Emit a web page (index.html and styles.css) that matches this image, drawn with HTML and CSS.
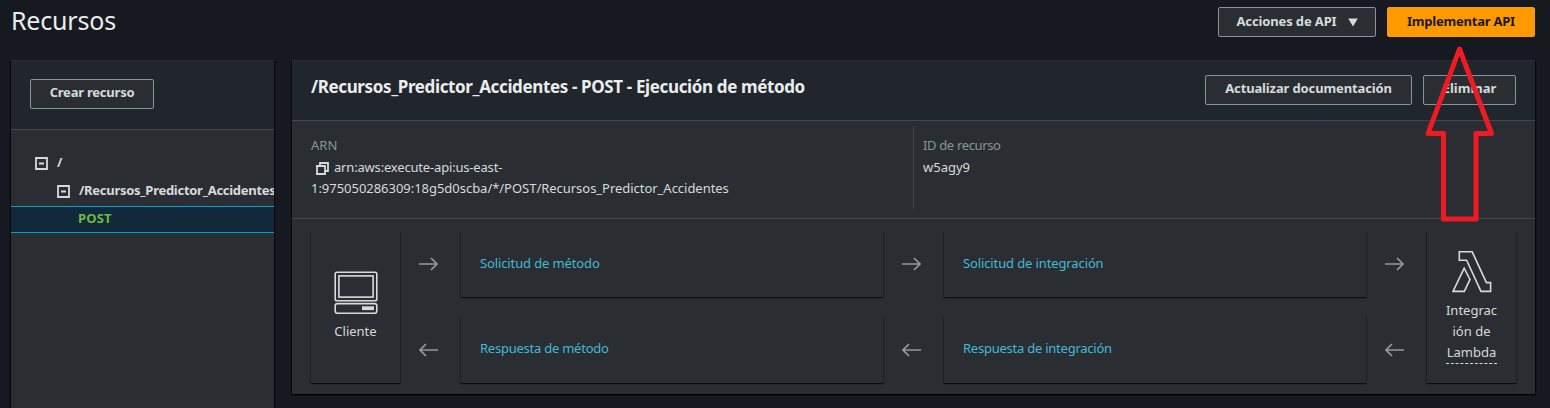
FILE: index.html
```html
<!DOCTYPE html>
<html lang="es">
<head>
<meta charset="utf-8">
<title>Recursos</title>
<link rel="stylesheet" href="styles.css">
</head>
<body>
<header class="topbar">
  <h1 class="title">Recursos</h1>
  <div class="actions">
    <button class="btn btn-api"><span class="t-api">Acciones de API</span><svg class="caret" width="10" height="9" viewBox="0 0 10 9"><path d="M.2 .5h9.6L5 8.5z" fill="#d5dbdb"/></svg></button>
    <button class="btn btn-primary"><span class="t-deploy">Implementar API</span></button>
  </div>
</header>
<main class="columns">
  <aside class="panel side">
    <div class="side-head"><button class="btn btn-create"><span class="t-create">Crear recurso</span></button></div>
    <div class="tree">
      <div class="node root"><svg class="toggle" width="13" height="13" viewBox="0 0 13 13"><path d="M1 1h11v11H1zM4 6.5h5" fill="none" stroke="#d5dbdb" stroke-width="1.8"/></svg><span>/</span></div>
      <div class="node child"><svg class="toggle" width="13" height="13" viewBox="0 0 13 13"><path d="M1 1h11v11H1zM4 6.5h5" fill="none" stroke="#d5dbdb" stroke-width="1.8"/></svg><span class="t-node">/Recursos_Predictor_Accidentes</span></div>
      <div class="node method"><span class="t-post">POST</span></div>
    </div>
  </aside>
  <section class="panel detail">
    <div class="detail-head">
      <h2 class="subtitle">/Recursos_Predictor_Accidentes - POST - Ejecución de método</h2>
      <div class="detail-actions">
        <button class="btn btn-doc"><span class="t-doc">Actualizar documentación</span></button>
        <button class="btn btn-del"><span class="t-del">Eliminar</span></button>
      </div>
    </div>
    <div class="info">
      <div class="field arn">
        <div class="label">ARN</div>
        <div class="value"><svg class="copy" width="13" height="13" viewBox="0 0 13 13"><path d="M1 4h8v8H1zM4 4V1h8v8H9" fill="none" stroke="#d5dbdb" stroke-width="1.8"/></svg><span class="t-arn1">arn:aws:execute-api:us-east-</span><br><span class="t-arn2">1:975050286309:18g5d0scba/*/POST/Recursos_Predictor_Accidentes</span></div>
      </div>
      <div class="field ident">
        <div class="label t-id">ID de recurso</div>
        <div class="value">w5agy9</div>
      </div>
    </div>
    <div class="flow">
      <div class="box end client">
        <svg width="44" height="44" viewBox="0 0 44 44" fill="none" stroke="#d5dbdb" stroke-width="1.6"><rect x="1.2" y="1.2" width="41.6" height="28.6" rx="1.8"/><rect x="4.9" y="4.9" width="34.2" height="21.2"/><rect x="1.2" y="32.6" width="41.6" height="9.6" rx="2.2"/><path d="M28 37.2H40" stroke-width="3.8"/></svg>
        <span class="t-client">Cliente</span>
      </div>
      <div class="arrow"><svg width="20" height="14" viewBox="0 0 20 14"><path d="M0 7h18M12 1l6 6-6 6"/></svg></div>
      <div class="box step"><a class="t-s1">Solicitud de método</a></div>
      <div class="arrow"><svg width="20" height="14" viewBox="0 0 20 14"><path d="M0 7h18M12 1l6 6-6 6"/></svg></div>
      <div class="box step"><a class="t-s2">Solicitud de integración</a></div>
      <div class="arrow"><svg width="20" height="14" viewBox="0 0 20 14"><path d="M0 7h18M12 1l6 6-6 6"/></svg></div>
      <div class="box end lambda">
        <svg width="42" height="44" viewBox="0 0 42 44" fill="none" stroke="#d5dbdb" stroke-width="1.6"><path d="M8.3 1.8H21.2L35.4 32.6h4.2v8.8H30L15.6 10.2H8.3zM13.2 18.2 2 41.4h11.3l5.7-12z"/></svg>
        <span class="lambda-text">Integrac<br>ión de<br>Lambda</span>
      </div>
      <div class="arrow back"><svg width="20" height="14" viewBox="0 0 20 14"><path d="M19 7H1M7 1L1 7l6 6"/></svg></div>
      <div class="box step"><a class="t-s3">Respuesta de método</a></div>
      <div class="arrow back"><svg width="20" height="14" viewBox="0 0 20 14"><path d="M19 7H1M7 1L1 7l6 6"/></svg></div>
      <div class="box step"><a class="t-s4">Respuesta de integración</a></div>
      <div class="arrow back"><svg width="20" height="14" viewBox="0 0 20 14"><path d="M19 7H1M7 1L1 7l6 6"/></svg></div>
    </div>
  </section>
</main>
<svg class="callout" width="72" height="178" viewBox="0 0 72 178"><path d="M35.5 5 67.5 89.5H52V175H19.5V89.5H4z" fill="none" stroke="#ed1c24" stroke-width="5" stroke-linejoin="round"/></svg>
</body>
</html>
```
FILE: styles.css
```css
* { box-sizing: border-box; }
body {
  margin: 0; height: 408px; overflow: hidden; position: relative;
  background: #16191f; color: #d5dbdb;
  font: 13px/21px "Noto Sans", "Open Sans", sans-serif;
}
span, a, h1, h2 { white-space: nowrap; }
svg { flex: none; display: block; }
.topbar { height: 60px; padding: 7px 15px 0 11px; display: flex; justify-content: space-between; }
.title { margin: -3px 0 0; font-size: 25px; line-height: 32px; font-weight: 400; color: #eaeded; letter-spacing: -.2px; }
.actions, .detail-actions { display: flex; gap: 11px; }
.btn {
  height: 30px; padding: 0 0 2px; border: 1px solid #879596; border-radius: 2px;
  background: #2a2e33; color: #d5dbdb; font: 700 13px/20px "Noto Sans", sans-serif;
  display: flex; align-items: center; justify-content: center;
}
.btn-api { width: 158px; gap: 11px; }
.caret { margin-top: 3px; }
.btn-primary { width: 148px; background: #ff9900; border-color: #ff9900; color: #16191f; }
.btn-create, .btn-doc, .btn-del { padding-bottom: 4px; }
.btn-create { width: 124px; }
.btn-doc { width: 207px; }
.btn-del { width: 93px; }
.t-api { letter-spacing: -.13px; }
.t-deploy, .t-create { letter-spacing: -.22px; }
.t-doc { letter-spacing: -.13px; }
.columns { display: flex; gap: 18px; padding-left: 11px; align-items: flex-start; }
.panel { background: #2a2e33; border-top: 1px solid #2a2e33; box-shadow: 0 1px 1px #000a, 1px 1px 1px #0008, -1px 1px 1px #0008; }
.side { width: 263px; height: 360px; overflow: hidden; }
.side-head { height: 69px; padding: 18px 19px; background: #21252c; border-bottom: 1px solid #414750; }
.tree { padding-top: 19px; font-weight: 700; }
.node { display: flex; align-items: center; gap: 9px; height: 28px; }
.node > span { margin-top: -1px; }
.root { padding-left: 24px; }
.child { padding-left: 46px; height: 29px; padding-bottom: 1px; }
.t-node { letter-spacing: -.28px; }
.method { height: 27px; padding: 0 0 1px 67px; background: #12293b; border: solid #00a1c9; border-width: 1px 0; color: #6fb83f; letter-spacing: .2px; }
.detail { width: 1243px; height: 334px; }
.detail-head { height: 60px; padding: 14px 19px 0; display: flex; justify-content: space-between; background: #21252c; border-bottom: 1px solid #414750; }
.subtitle { margin: 1px 0 0; font-size: 17px; line-height: 22px; color: #eaeded; letter-spacing: -.37px; }
.info { height: 98px; padding: 5px 19px 9px; display: grid; grid-template-columns: 602px 1fr; border-bottom: 1px solid #414750; }
.field { padding-top: 9px; }
.ident { padding-left: 9px; border-left: 1px solid #414750; }
.label { color: #879596; margin-bottom: 1px; }
.t-id { letter-spacing: -.35px; }
.t-arn1 { letter-spacing: -.18px; }
.t-arn2 { letter-spacing: -.03px; }
.copy { display: inline-block; margin: 0 5px 0 5px; vertical-align: -3px; }
.flow { display: grid; grid-template: 66px 67px / 89px 61px 422px 61px 422px 61px 89px; row-gap: 19px; padding: 12px 19px 0; }
.box { clip-path: inset(0 -3px -3px); box-shadow: 0 1px 1px #0007, 1px 1px 1px #0003, -1px 1px 1px #0003; display: flex; }
.end { grid-row: 1 / 3; flex-direction: column; align-items: center; }
.client { grid-column: 1; padding-top: 40px; gap: 6px; }
.lambda { grid-column: 7; padding-top: 19px; gap: 6px; text-align: center; }
.lambda-text { border-bottom: 1px dashed #d5dbdb; }
.step { align-items: center; padding: 0 19px 2px; color: #44b9d6; }
.t-s1, .t-s2 { letter-spacing: -.12px; }
.t-s3, .t-s4 { letter-spacing: -.24px; }
.arrow { display: flex; align-items: center; padding: 0 0 1px 19px; }
.arrow.back { padding-bottom: 0; }
.arrow path { fill: none; stroke: #95999c; stroke-width: 1.7; }
.callout { position: absolute; left: 1424px; top: 44px; }
```
